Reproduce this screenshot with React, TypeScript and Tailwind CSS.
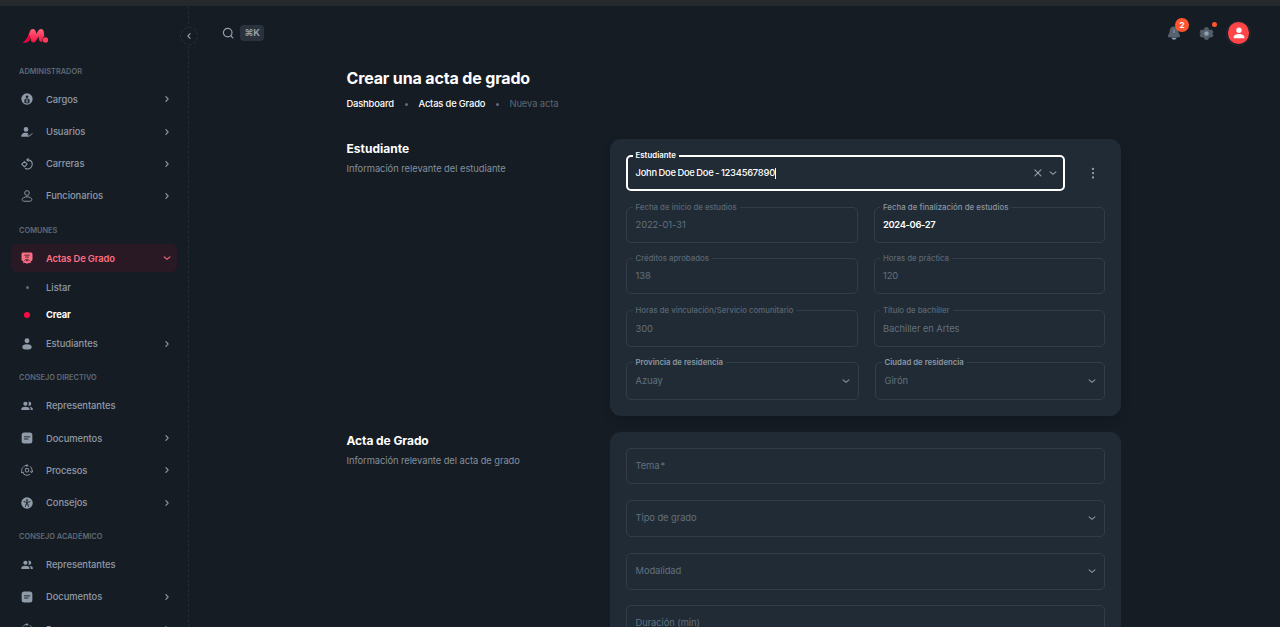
import type { ReactNode } from "react";

function Chevron({ className = "" }: { className?: string }) {
  return (
    <svg viewBox="0 0 10 10" className={`h-[10px] w-[10px] shrink-0 ${className}`} fill="none" stroke="currentColor" strokeWidth="1.1" strokeLinecap="round" strokeLinejoin="round">
      <path d="M3.9 2.7 6.1 5 3.9 7.3" />
    </svg>
  );
}

function Down({ className = "" }: { className?: string }) {
  return (
    <svg viewBox="0 0 10 10" className={`h-[10px] w-[10px] shrink-0 ${className}`} fill="none" stroke="currentColor" strokeWidth="1.1" strokeLinecap="round" strokeLinejoin="round">
      <path d="M2.1 3.900 5 6.300 7.900 3.900" />
    </svg>
  );
}

const icons: Record<string, ReactNode> = {
  cargos: (
    <>
      <circle cx="12" cy="12" r="11.300" fill="currentColor" />
      <circle cx="12" cy="7.500" r="2.600" fill="#161c24" />
      <path d="M6.800 19.500v-5.200c0-2.200 2.200-3.300 5.200-3.300s5.200 1.100 5.200 3.300v5.200c-3 2-7.400 2-10.400 0z" fill="#161c24" />
      <path d="M9.600 14h4.800M9.600 18h4.800M12 14v4" stroke="currentColor" strokeWidth="1.800" />
    </>
  ),
  usuarios: (
    <>
      <circle cx="10" cy="6.800" r="4.700" fill="currentColor" />
      <path d="M.6 21.300c-.6-4.900 3.800-8 8.900-8 2.300 0 4 .6 5.300 1.700l-2 2.200 3.800 4.100z" fill="currentColor" />
      <path d="m14.500 17.200 2.900 2.800 5.400-5.600" fill="none" stroke="currentColor" strokeWidth="2" />
    </>
  ),
  carreras: (
    <g fill="none" stroke="currentColor" strokeWidth="2.100" strokeLinecap="round" strokeLinejoin="round">
      <path d="m1.500 12.400 5.400-5.400 5.400 5.400-5.400 5.400z" />
      <path d="M12 3.700c5.700 0 10.500 3.200 10.500 8.800 0 5.300-4.300 9.500-9.500 9.500-1.500 0-3-.3-4.200-1" />
      <path d="m14.500 1.100-2.800 2.600 2.800 2.800" />
    </g>
  ),
  funcionarios: (
    <g fill="none" stroke="currentColor" strokeWidth="1.9">
      <circle cx="12" cy="6" r="4.700" />
      <path d="M5.200 22.500c-4-1.200-3.700-5.300.2-7.400 3.700-2 9.500-2 13.200 0 3.900 2.100 4.200 6.200.2 7.400z" strokeLinejoin="round" />
    </g>
  ),
  actas: (
    <>
      <path d="M4.500 1h15c2 0 3.500 1.200 3.500 3.200v10.500c0 2.600-1.400 3.600-3.600 3.800v4l-3.200-1.200L12 23.300l-4.200-2-3.200 1.200v-4C2.400 18.300 1 17.300 1 14.700V4.200C1 2.200 2.500 1 4.500 1z" fill="currentColor" />
      <path d="M6.500 6.300h11M8.500 10h7" stroke="#281925" strokeWidth="1.6" />
      <path d="M7 18c1.500-4.700 8.500-4.700 10 0" fill="none" stroke="#281925" strokeWidth="1.5" />
      <circle cx="12" cy="17.300" r="1.600" fill="#281925" />
    </>
  ),
  estudiantes: (
    <>
      <circle cx="12" cy="5.600" r="4.900" fill="currentColor" />
      <ellipse cx="12" cy="17.800" rx="9.400" ry="5.200" fill="currentColor" />
    </>
  ),
  representantes: (
    <>
      <circle cx="8.800" cy="7.500" r="4.200" fill="currentColor" />
      <path d="M.6 20v-2c0-3.200 4-4.700 8.200-4.700S17 14.800 17 18v2z" fill="currentColor" />
      <path d="M14.500 3.700a4.200 4.200 0 1 1 0 7.600c1.500-2.100 1.500-5.500 0-7.600zM17.500 13.500c3.300.5 6 1.900 6 4.300V20h-4.200v-2.300c0-1.600-.7-3.100-1.800-4.200z" fill="currentColor" />
    </>
  ),
  documentos: (
    <>
      <rect x="1.300" y=".8" width="21.400" height="22.400" rx="5" fill="currentColor" />
      <path d="M7 9.700h10.500M7 14h7" stroke="#161c24" strokeWidth="1.800" strokeLinecap="round" />
    </>
  ),
  procesos: (
    <g fill="none" stroke="currentColor" strokeWidth="1.900" strokeLinecap="round" strokeLinejoin="round">
      <rect x="8.700" y="9.200" width="6.600" height="6.600" rx="1.300" />
      <path d="M4 6.500c2-2.600 4.800-3.700 8-3.700h1.500M11.500.9l2.300 2-2.300 2.400" />
      <path d="M18.500 5c3.300 2.700 4.600 6.800 3.300 11.300M18.700 15.300l2.800 1.800 1.800-2.600" />
      <path d="M17.500 21c-3.300 2-7.700 2-11 0M1.900 17.500c-1-3-.8-6 .3-8.500M.8 17.200l3.500-.9 1.200 3.500" />
    </g>
  ),
  consejos: (
    <>
      <circle cx="12" cy="12" r="11.500" fill="currentColor" />
      <circle cx="12" cy="6.200" r="1.900" fill="#161c24" />
      <path d="M5.800 9.300c4 1.500 8.400 1.500 12.400 0M12 10v4M9 18.800l1.500-5.300h3l1.500 5.300" fill="none" stroke="#161c24" strokeWidth="1.900" strokeLinecap="round" strokeLinejoin="round" />
    </>
  ),
};

function Icon({ name }: { name: string }) {
  return (
    <svg viewBox="0 0 24 24" className="h-3 w-3 shrink-0">
      {icons[name]}
    </svg>
  );
}

function NavHeader({ children, className = "h-[34.200px] pt-[6px] -mt-[4.200px]" }: { children: string; className?: string }) {
  return (
    <div className={`flex shrink-0 items-center pl-[19px] text-[7.400px] font-semibold text-[#5d6a77] ${className}`}>{children}</div>
  );
}

function NavItem({ icon, label, active, arrow = true }: { icon: string; label: string; active?: boolean; arrow?: boolean }) {
  return (
    <div
      className={`mx-[11px] mb-[4.200px] flex h-7 shrink-0 items-center rounded-md pr-[5.500px] pl-[10px] ${
        active ? "bg-[#281925] font-semibold text-[#fb6f84]" : "font-medium text-[#8f9ba8]"
      }`}
    >
      <Icon name={icon} />
      <span className={`ml-[13px] flex-1 pt-px text-[9.400px] ${active ? "tracking-[-0.140px]" : "tracking-[-0.060px]"}`}>{label}</span>
      {arrow && (active ? <Down /> : <Chevron />)}
    </div>
  );
}

function SubItem({ label, active }: { label: string; active?: boolean }) {
  return (
    <div className={`flex h-[27px] items-center pl-[21px] ${active ? "font-bold text-white" : "font-medium text-[#8f9ba8]"}`}>
      <span className="flex w-3 justify-center">
        {active ? <span className="h-[6px] w-[6px] rounded-full bg-[#fa0c42]" /> : <span className="h-[3px] w-[3px] rounded-full bg-[#5f6c79]" />}
      </span>
      <span className={`ml-[13px] text-[9.400px] ${active ? "tracking-[-0.150px]" : "tracking-[0px]"}`}>{label}</span>
    </div>
  );
}

function Field({
  label,
  value,
  className = "",
  labelClass = "font-medium text-[#5a6773]",
  valueClass = "text-[#62707d] tracking-[-0.080px]",
  arrow,
}: {
  label?: string;
  value: string;
  className?: string;
  labelClass?: string;
  valueClass?: string;
  arrow?: boolean;
}) {
  return (
    <div className={`relative flex items-center rounded-[5px] border border-[#323d47] pr-[7px] pl-[8.500px] ${className}`}>
      {label && (
        <span className={`absolute -top-[6px] left-[5.500px] bg-[#212b35] px-[3px] text-[7.800px] leading-[11px] whitespace-nowrap ${labelClass}`}>{label}</span>
      )}
      <span className={`flex-1 pt-px text-[9.400px] ${valueClass}`}>{value}</span>
      {arrow && <Down className="text-[#8995a1]" />}
    </div>
  );
}

function Logo() {
  return (
    <svg viewBox="0 0 27 16" className="h-4 w-[27px]">
      <defs>
        <linearGradient id="logo-fill" gradientUnits="userSpaceOnUse" x1="0" y1="1" x2="0" y2="15">
          <stop offset="0" stopColor="#ff6478" />
          <stop offset="1" stopColor="#fa0c42" />
        </linearGradient>
      </defs>
      <path d="M.4 14.500C3 13.800 4 11.800 5.600 9.300L8 3.300C8.700 1.800 9.500 1 10.800 1c1.700 0 2.500 1 3 2.600l.6 2.200 1.500-2.500C16.900 1.800 17.700 1 19 1c1.900 0 2.700 1.300 2.900 3.500l.4 3.800c-1.600.9-2 3.300-1.800 5.200-1.800.9-3.200 0-3.500-2.300l-.5-2.700-2.200 3.700c-.9 1.500-1.800 2.200-3 2.200-1.500 0-2.300-1.100-2.600-2.900l-.3-1.800c-1.500 3.300-2.700 4.800-5 4.800z" fill="url(#logo-fill)" />
      <path d="M.4 14.500C3 13.800 4 11.800 5.600 9.300l1.300-3.200 1.500 3.600c-1.500 3.300-2.700 4.800-5 4.800z" fill="#e6003a" />
      <circle cx="23.500" cy="12" r="2.700" fill="#ff3b5d" />
    </svg>
  );
}

export default function App() {
  return (
    <div className="flex h-[627px] w-[1280px] flex-col overflow-hidden bg-[#161c24] font-[Inter,sans-serif]">
      <div className="h-[6px] shrink-0 bg-[#25292c]" />
      <div className="flex min-h-0 flex-1">
        <aside className="relative flex w-[189px] shrink-0 flex-col border-r border-dashed border-[#222a33]">
          <div className="flex h-[45.700px] shrink-0 items-end pb-[7.700px] pl-[22px]">
            <Logo />
          </div>
          <div className="absolute top-[21px] -right-[10px] flex h-[18px] w-[18px] items-center justify-center rounded-full border border-dashed border-[#29323b] bg-[#161c24]">
            <Chevron className="rotate-180 text-[#919eab]" />
          </div>
          <NavHeader className="h-[33.800px] pt-[5px]">ADMINISTRADOR</NavHeader>
          <NavItem icon="cargos" label="Cargos" />
          <NavItem icon="usuarios" label="Usuarios" />
          <NavItem icon="carreras" label="Carreras" />
          <NavItem icon="funcionarios" label="Funcionarios" />
          <NavHeader>COMUNES</NavHeader>
          <NavItem icon="actas" label="Actas De Grado" active />
          <div className="-mt-[2.300px] mb-[1.700px] shrink-0">
            <SubItem label="Listar" />
            <SubItem label="Crear" active />
          </div>
          <NavItem icon="estudiantes" label="Estudiantes" />
          <NavHeader>CONSEJO DIRECTIVO</NavHeader>
          <NavItem icon="representantes" label="Representantes" arrow={false} />
          <NavItem icon="documentos" label="Documentos" />
          <NavItem icon="procesos" label="Procesos" />
          <NavItem icon="consejos" label="Consejos" />
          <NavHeader>CONSEJO ACADÉMICO</NavHeader>
          <NavItem icon="representantes" label="Representantes" arrow={false} />
          <NavItem icon="documentos" label="Documentos" />
          <NavItem icon="procesos" label="Procesos" />
        </aside>

        <div className="flex min-w-0 flex-1 flex-col">
          <header className="flex h-[54px] shrink-0 items-center pr-[29px] pl-[33px]">
            <svg viewBox="0 0 12 12" className="h-3 w-3" fill="none" stroke="#919eab" strokeWidth="1.200" strokeLinecap="round">
              <circle cx="5.700" cy="5.600" r="4.300" />
              <path d="m9 9 1.900 1.900" />
            </svg>
            <span className="ml-[6px] flex h-4 w-6 items-center justify-center rounded bg-[#2a323c] text-[9.300px] font-bold tracking-[-0.300px] text-[#919eab]">⌘K</span>
            <div className="flex-1" />
            <div className="relative mr-[18px]">
              <svg viewBox="0 0 14 16" className="h-4 w-[14px]">
                <path d="M7 1.500c2.700 0 4.300 2 4.300 4.600 0 2.500 1.700 3.400 1.700 5.200 0 1-1.500 1.400-6 1.400s-6-.4-6-1.400c0-1.800 1.700-2.700 1.700-5.200C2.700 3.500 4.300 1.500 7 1.500z" fill="#56626e" />
                <path d="M4.500 13.100h5c-.5 1.300-1.400 1.700-2.500 1.700s-2-.4-2.500-1.700z" fill="#919eab" />
                <path d="M7 4.500v3.500" stroke="#919eab" strokeWidth="1" />
              </svg>
              <span className="absolute -top-[7px] left-[8px] flex h-[14px] w-[14px] items-center justify-center rounded-full bg-[#ff5630] text-[8px] font-bold text-white">2</span>
            </div>
            <div className="relative mr-[12px]">
              <svg viewBox="0 0 24 24" className="h-[15px] w-[15px]">
                <path d="M9.300 2h5.400l1 3 2 1.200 3.100-.7 2.500 4.300L21 12l2.300 2.200-2.500 4.300-3.100-.7-2 1.200-1 3H9.300l-1-3-2-1.200-3.100.7-2.500-4.300L3 12 .7 9.800l2.500-4.300 3.100.7 2-1.200z" fill="#515d69" />
                <circle cx="12" cy="12" r="3.700" fill="#919eab" />
              </svg>
              <span className="absolute -top-[4px] left-[12.500px] h-[5.500px] w-[5.500px] rounded-full bg-[#ff5630]" />
            </div>
            <div className="flex h-[25px] w-[25px] items-center justify-center rounded-full border border-[#242b33]">
              <div className="flex h-[21.500px] w-[21.500px] items-center justify-center rounded-full bg-[#ff4548]">
                <svg viewBox="0 0 12 12" className="h-3 w-3" fill="white">
                  <circle cx="6" cy="3.300" r="2.700" />
                  <path d="M.7 11.300V10c0-2 2.700-3 5.300-3s5.300 1 5.300 3v1.300z" />
                </svg>
              </div>
            </div>
          </header>

          <main className="flex flex-col pl-[157.500px]">
            <h1 className="mt-[7px] h-[22px] text-[16px] leading-[22px] font-bold tracking-[-0.150px] text-white">Crear una acta de grado</h1>
            <div className="mt-[8px] flex h-[14px] items-center text-[9.400px] font-medium tracking-[-0.180px] text-white">
              <span className="w-[47px] whitespace-nowrap">Dashboard</span>
              <span className="mx-[11px] h-[3px] w-[3px] rounded-full bg-[#5f6c79]" />
              <span className="w-[66px] whitespace-nowrap">Actas de Grado</span>
              <span className="mx-[11px] h-[3px] w-[3px] rounded-full bg-[#5f6c79]" />
              <span className="font-normal tracking-[-0.120px] text-[#5a6673]">Nueva acta</span>
            </div>

            <section className="mt-[28px] flex">
              <div className="w-[263.500px] pt-px">
                <h2 className="h-[18px] text-[12px] leading-[18px] font-bold text-white">Estudiante</h2>
                <p className="mt-[4px] text-[9.400px] leading-[14px] tracking-[-0.060px] text-[#838f9b]">Información relevante del estudiante</p>
              </div>
              <div className="h-[277px] w-[511px] rounded-[11px] bg-[#212b35] px-4 pt-4 shadow-[0_4px_10px_rgba(0,0,0,0.15)]">
                <div className="flex items-center">
                  <div className="relative flex h-9 w-[439px] items-center rounded-[5px] border-2 border-white pr-[5px] pl-[7.500px]">
                    <span className="absolute -top-[7px] left-[4.500px] bg-[#212b35] px-[3px] text-[7.800px] leading-[11px] font-semibold tracking-[0.050px] text-white">Estudiante</span>
                    <span className="pt-px text-[9.400px] font-medium tracking-[-0.240px] text-white [word-spacing:-0.600px]">John Doe Doe Doe - 1234567890</span>
                    <span className="h-[11px] w-px bg-white" />
                    <span className="flex-1" />
                    <svg viewBox="0 0 10 10" className="mr-[5px] h-[10px] w-[10px]" stroke="#919eab" strokeWidth="1.100" strokeLinecap="round">
                      <path d="m1.900 1.900 6 6M7.900 1.900l-6 6" />
                    </svg>
                    <Down className="text-[#919eab]" />
                  </div>
                  <svg viewBox="0 0 4 12" className="ml-[25.500px] h-3 w-1" fill="#919eab">
                    <circle cx="2" cy="1.900" r="1.150" />
                    <circle cx="2" cy="6.200" r="1.150" />
                    <circle cx="2" cy="10.500" r="1.150" />
                  </svg>
                </div>
                <div className="mt-4 flex justify-between">
                  <Field label="Fecha de inicio de estudios" value="2022-01-31" className="h-9 w-[232px]" />
                  <Field label="Fecha de finalización de estudios" value="2024-06-27" className="h-9 w-[231.500px]" labelClass="font-medium tracking-[0.040px] text-[#8a96a2]" valueClass="font-semibold tracking-[-0.350px] text-white" />
                </div>
                <div className="mt-[15px] flex justify-between">
                  <Field label="Créditos aprobados" value="138" className="h-9 w-[232px]" />
                  <Field label="Horas de práctica" value="120" className="h-9 w-[231.500px]" />
                </div>
                <div className="mt-[16px] flex justify-between">
                  <Field label="Horas de vinculación/Servicio comunitario" value="300" className="h-[37px] w-[232px]" />
                  <Field label="Título de bachiller" value="Bachiller en Artes" className="h-[37px] w-[231.500px]" />
                </div>
                <div className="mt-[15px] flex justify-between">
                  <Field label="Provincia de residencia" value="Azuay" className="h-[38px] w-[233px]" labelClass="font-semibold text-[#8a96a2]" arrow />
                  <Field label="Ciudad de residencia" value="Girón" className="h-[38px] w-[230px]" labelClass="font-semibold text-[#8a96a2]" arrow />
                </div>
              </div>
            </section>

            <section className="mt-4 flex">
              <div className="w-[263.500px]">
                <h2 className="h-[18px] text-[12px] leading-[18px] font-bold tracking-[-0.080px] text-white">Acta de Grado</h2>
                <p className="mt-[4px] text-[9.400px] leading-[14px] tracking-[-0.080px] text-[#838f9b]">Información relevante del acta de grado</p>
              </div>
              <div className="flex h-[400px] w-[511px] flex-col rounded-[11px] bg-[#212b35] px-4 pt-4">
                <Field value="Tema *" className="h-9 [word-spacing:-1.500px]" />
                <Field value="Tipo de grado" className="mt-[15.500px] h-[37px]" arrow />
                <Field value="Modalidad" className="mt-[16px] h-[37px]" arrow />
                <Field value="Duración (min)" className="mt-[15.500px] h-9" />
              </div>
            </section>
          </main>
        </div>
      </div>
    </div>
  );
}
